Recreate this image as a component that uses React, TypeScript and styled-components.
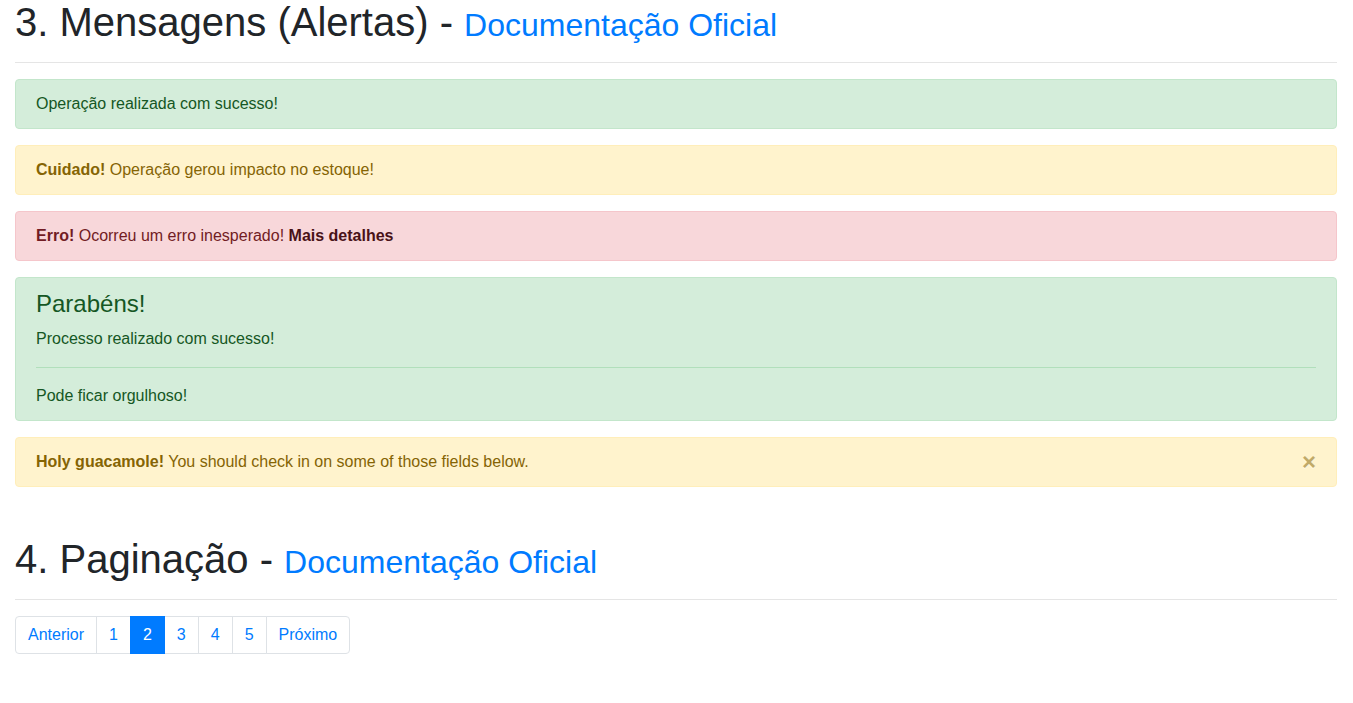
import React from "react";
import styled, { createGlobalStyle, css } from "styled-components";

const GlobalStyle = createGlobalStyle`
  *, *::before, *::after { box-sizing: border-box; }
  html, body { margin: 0; padding: 0; background: #fff; }
  body {
    font-family: "Liberation Sans", Arial, Helvetica, sans-serif;
    font-size: 16px;
    line-height: 1.5;
    color: #212529;
  }
`;

const Container = styled.div`
  padding: 0 16px 0 15px;
`;

const Section = styled.section<{ $first?: boolean }>`
  padding-top: ${(p) => (p.$first ? "0" : "34px")};
`;

const Heading = styled.h1`
  margin: 0 0 16px;
  padding-bottom: 18px;
  border-bottom: 1px solid rgba(0, 0, 0, 0.1);
  font-size: 40px;
  font-weight: 400;
  line-height: 44px;
  color: #212529;
`;

const HeadingLink = styled.a`
  font-size: 80%;
  line-height: 1;
  color: #007bff;
  text-decoration: none;
`;

type Variant = "success" | "warning" | "danger";

const palette: Record<Variant, { fg: string; bg: string; border: string; hr: string; link: string }> = {
  success: { fg: "#155724", bg: "#d4edda", border: "#c3e6cb", hr: "#b1dfbb", link: "#0b2e13" },
  warning: { fg: "#856404", bg: "#fff3cd", border: "#ffeeba", hr: "#ffe8a1", link: "#533f03" },
  danger: { fg: "#721c24", bg: "#f8d7da", border: "#f5c6cb", hr: "#f1b0b7", link: "#491217" },
};

const Alert = styled.div<{ $variant: Variant; $dismissible?: boolean }>`
  position: relative;
  padding: 12px 20px;
  ${(p) => p.$dismissible && css`padding-right: 64px;`}
  margin-bottom: 16px;
  border: 1px solid ${(p) => palette[p.$variant].border};
  border-radius: 4px;
  background: ${(p) => palette[p.$variant].bg};
  color: ${(p) => palette[p.$variant].fg};

  hr {
    margin: 16px 0;
    border: 0;
    border-top: 1px solid ${(p) => palette[p.$variant].hr};
  }
`;

const AlertLink = styled.a<{ $variant: Variant }>`
  font-weight: 700;
  color: ${(p) => palette[p.$variant].link};
  text-decoration: none;
`;

const AlertHeading = styled.h4`
  margin: 0 0 8px;
  font-size: 24px;
  font-weight: 400;
  line-height: 1.2;
  color: inherit;
`;

const AlertText = styled.p<{ $last?: boolean }>`
  margin: 0 0 ${(p) => (p.$last ? "0" : "16px")};
`;

const CloseButton = styled.button`
  position: absolute;
  top: 0;
  right: 0;
  padding: 12px 20px;
  border: 0;
  background: transparent;
  font-family: inherit;
  font-size: 24px;
  font-weight: 700;
  line-height: 1;
  color: inherit;
  text-shadow: 0 1px 0 #fff;
  opacity: 0.5;
  cursor: pointer;
`;

const Pagination = styled.ul`
  display: flex;
  margin: 0;
  padding: 0;
  list-style: none;
`;

const PageItem = styled.li`
  &:first-child a { border-top-left-radius: 4px; border-bottom-left-radius: 4px; margin-left: 0; }
  &:last-child a { border-top-right-radius: 4px; border-bottom-right-radius: 4px; }
`;

const PageLink = styled.a<{ $active?: boolean }>`
  display: block;
  padding: 8px 12px;
  margin-left: -1px;
  line-height: 1.25;
  color: ${(p) => (p.$active ? "#fff" : "#007bff")};
  background: ${(p) => (p.$active ? "#007bff" : "#fff")};
  border: 1px solid ${(p) => (p.$active ? "#007bff" : "#dee2e6")};
  text-decoration: none;
  position: relative;
  z-index: ${(p) => (p.$active ? 1 : 0)};
`;

const pages = ["Anterior", "1", "2", "3", "4", "5", "Próximo"];

export default function App() {
  return (
    <>
      <GlobalStyle />
      <Container>
        <Section $first>
          <Heading>
            3. Mensagens (Alertas) - <HeadingLink href="#">Documentação Oficial</HeadingLink>
          </Heading>
          <Alert $variant="success">Operação realizada com sucesso!</Alert>
          <Alert $variant="warning">
            <strong>Cuidado!</strong> Operação gerou impacto no estoque!
          </Alert>
          <Alert $variant="danger">
            <strong>Erro!</strong> Ocorreu um erro inesperado!{" "}
            <AlertLink $variant="danger" href="#">Mais detalhes</AlertLink>
          </Alert>
          <Alert $variant="success">
            <AlertHeading>Parabéns!</AlertHeading>
            <AlertText>Processo realizado com sucesso!</AlertText>
            <hr />
            <AlertText $last>Pode ficar orgulhoso!</AlertText>
          </Alert>
          <Alert $variant="warning" $dismissible>
            <strong>Holy guacamole!</strong> You should check in on some of those fields below.
            <CloseButton type="button" aria-label="Close">×</CloseButton>
          </Alert>
        </Section>
        <Section>
          <Heading>
            4. Paginação - <HeadingLink href="#">Documentação Oficial</HeadingLink>
          </Heading>
          <Pagination>
            {pages.map((p) => (
              <PageItem key={p}>
                <PageLink href="#" $active={p === "2"}>{p}</PageLink>
              </PageItem>
            ))}
          </Pagination>
        </Section>
      </Container>
    </>
  );
}
